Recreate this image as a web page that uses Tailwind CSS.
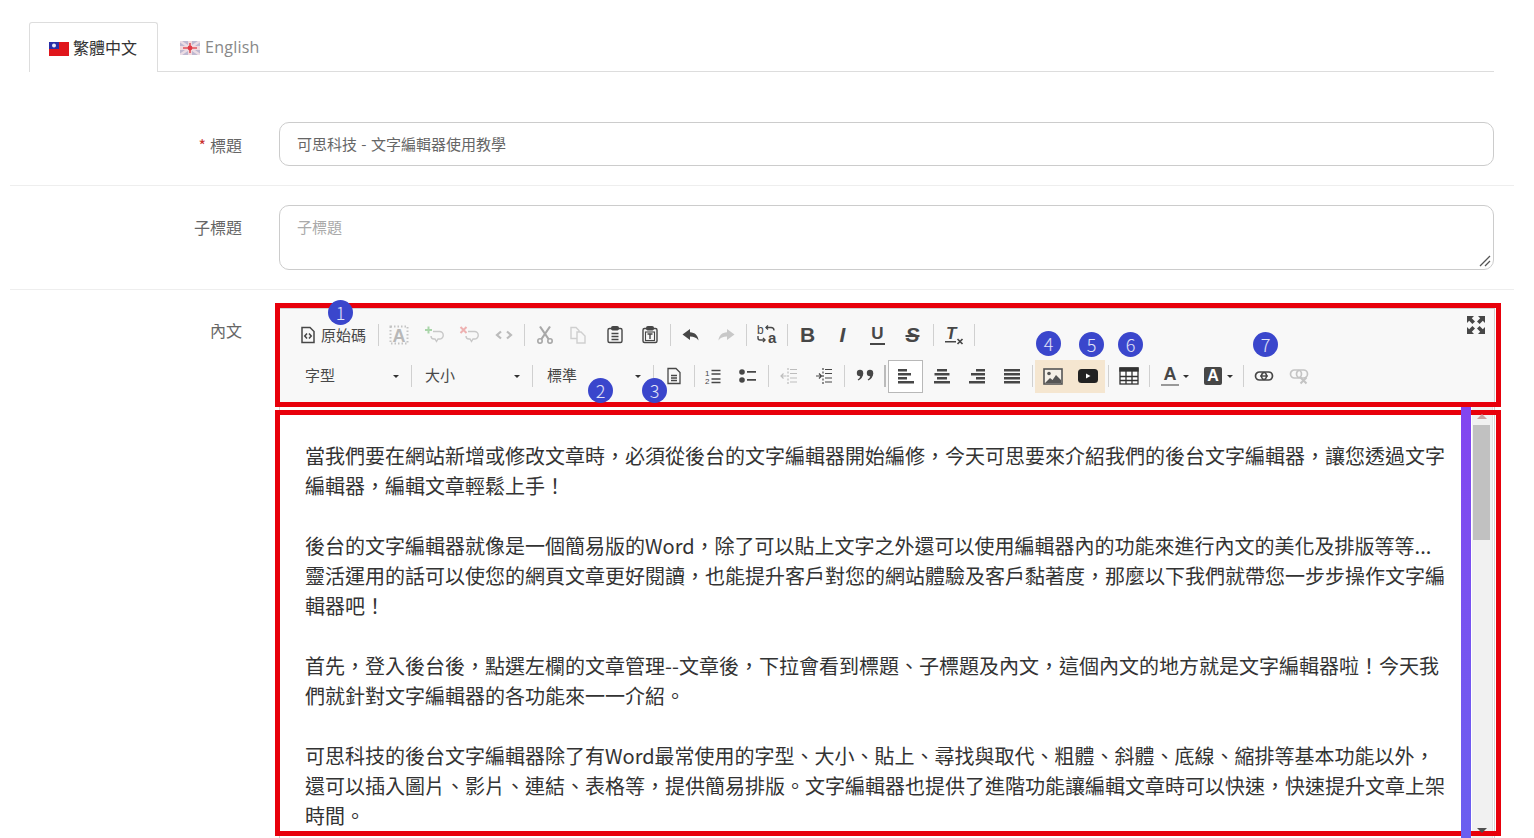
<!DOCTYPE html>
<html lang="zh-Hant">
<head>
<meta charset="utf-8">
<script src="https://cdn.jsdelivr.net/npm/@tailwindcss/browser@4"></script>
<title>文字編輯器</title>
</head>
<body class="bg-white">
<div class="relative h-[838px] w-[1534px] overflow-hidden bg-white font-['Noto_Sans_CJK_TC','Noto_Sans',sans-serif] text-[#333]">

  <!-- tabs -->
  <div class="ml-[29px] w-[1465px] pt-[22px]">
    <div class="flex h-[50px] border-b border-[#ddd]">
      <div class="flex h-[50px] w-[129px] items-center rounded-t-[3px] border border-b-0 border-[#ddd] bg-white pl-[19px] text-[16px] text-[#333]">
        <svg class="mr-[4px] mt-[2px]" width="20" height="14" viewBox="0 0 20 14"><rect width="20" height="14" fill="#e0161c"/><rect width="10" height="7" fill="#2a2fa8"/><circle cx="5" cy="3.5" r="2" fill="#e8e8f8"/></svg>
        <span class="-mt-[1px]">繁體中文</span>
      </div>
      <div class="flex h-[50px] items-center pl-[22px] text-[16px] text-[#888]">
        <svg class="mr-[5px] mt-[2px]" width="20" height="14" viewBox="0 0 20 14"><rect width="20" height="14" fill="#bdb8d0"/><path d="M0 0L20 14M20 0L0 14" stroke="#ecdce4" stroke-width="2.5"/><path d="M10 0V14M0 7H20" stroke="#f0d8dc" stroke-width="4"/><path d="M10 2V12M3 7H17" stroke="#e0505a" stroke-width="1.6"/><circle cx="10" cy="7" r="2.4" fill="#e03a44"/></svg>
        <span class="font-['Open_Sans','Noto_Sans',sans-serif] tracking-[0.25px]">English</span>
      </div>
    </div>
  </div>

  <!-- title row -->
  <div class="ml-[10px] flex h-[114px] w-[1504px] border-b border-[#eee] pt-[50px]">
    <label class="w-[232px] pt-[11px] text-right text-[16px] leading-[24px] text-[#666]"><span class="mr-[4px] text-[#c9302c]">*</span>標題</label>
    <div class="ml-[37px] h-[44px] w-[1215px] rounded-[10px] border border-[#ccc] pl-[17px] pt-[9px] text-[15px] leading-[24px] text-[#666] [word-spacing:1px]">可思科技 - 文字編輯器使用教學</div>
  </div>

  <!-- subtitle row -->
  <div class="ml-[10px] flex h-[104px] w-[1504px] border-b border-[#eee] pt-[19px]">
    <label class="w-[232px] pt-[10px] text-right text-[16px] leading-[24px] text-[#666]">子標題</label>
    <div class="relative ml-[37px] h-[65px] w-[1215px] rounded-[10px] border border-[#ccc] pl-[17px] pt-[10px] text-[15px] leading-[21px] text-[#aaa]">子標題
      <svg class="absolute bottom-[1px] right-[1px]" width="14" height="14" viewBox="0 0 14 14"><path d="M2 12L12 2M7 12L12 7" stroke="#555" stroke-width="1.3"/></svg>
    </div>
  </div>

  <!-- content row -->
  <div class="ml-[10px] flex w-[1504px] pt-[18px]">
    <label class="w-[232px] pt-[10px] text-right text-[16px] leading-[24px] text-[#666]">內文</label>
    <div class="ml-[37px] w-[1216px] border border-[#d1d1d1]">

      <!-- toolbar -->
      <div class="h-[97px] bg-[#f8f8f8] pl-[17px] pt-[11px] text-[#474747]">
        <div class="flex h-[30px] items-center">
          <div class="flex h-[30px] w-[78px] items-center pl-[3px] text-[15px] text-[#484848]">
            <svg class="mr-[5px]" width="16" height="18" viewBox="0 0 16 18" fill="none" stroke="#474747" stroke-width="1.5"><path d="M2 1.5h8l4 4v11H2z"/><path d="M7 7.5L4.8 10 7 12.5M9 7.5L11.2 10 9 12.5" stroke-width="1.6"/></svg>
            <span>原始碼</span>
          </div>
          <div class="flex h-[22px] w-[6px] justify-center"><div class="w-px bg-[#d0d0d0]"></div></div>
          <div class="flex h-[30px] w-[35px] items-center justify-center"><svg width="20" height="20" viewBox="0 0 20 20"><rect x="1.5" y="1.5" width="17" height="17" fill="none" stroke="#c4c4c4" stroke-width="2" stroke-dasharray="1.5 2"/><text x="10" y="16.5" text-anchor="middle" font-family="Liberation Sans" font-weight="700" font-size="18" fill="#b8b8b8">A</text></svg></div>
          <div class="flex h-[30px] w-[35px] items-center justify-center"><svg width="20" height="20" viewBox="0 0 20 20" fill="none"><path d="M9 6.5h6.5a3 3 0 0 1 0 7.5H14l-1.5 2.5L11 14h-1a3 3 0 0 1-3-3" stroke="#c8c8c8" stroke-width="1.4"/><path d="M4.5 1.5v7M1 5h7" stroke="#a9d5a9" stroke-width="2"/></svg></div>
          <div class="flex h-[30px] w-[35px] items-center justify-center"><svg width="20" height="20" viewBox="0 0 20 20" fill="none"><path d="M9 6.5h6.5a3 3 0 0 1 0 7.5H14l-1.5 2.5L11 14h-1a3 3 0 0 1-3-3" stroke="#c8c8c8" stroke-width="1.4"/><path d="M1.5 2l6 6M7.5 2l-6 6" stroke="#eeb1b1" stroke-width="2"/></svg></div>
          <div class="flex h-[30px] w-[35px] items-center justify-center"><svg width="20" height="20" viewBox="0 0 20 20" fill="none" stroke="#bbb" stroke-width="2.2"><path d="M7 6.5L3 10l4 3.5M13 6.5l4 3.5-4 3.5"/></svg></div>
          <div class="flex h-[22px] w-[6px] justify-center"><div class="w-px bg-[#d0d0d0]"></div></div>
          <div class="flex h-[30px] w-[35px] items-center justify-center"><svg width="20" height="20" viewBox="0 0 20 20" fill="none" stroke="#a8a8a8" stroke-width="2.2"><path d="M5 1.5l8.5 12.5M15 1.5L6.5 14"/><circle cx="5" cy="16" r="2.2" stroke-width="1.6"/><circle cx="15" cy="16" r="2.2" stroke-width="1.6"/></svg></div>
          <div class="flex h-[30px] w-[35px] items-center justify-center"><svg class="-ml-[4px]" width="20" height="20" viewBox="0 0 20 20" fill="none" stroke="#cfcfcf" stroke-width="1.4"><path d="M3 2.5h5l3 3v8H3z"/><path d="M9 7h4l4 4v7H9z" fill="#f8f8f8"/></svg></div>
          <div class="flex h-[30px] w-[35px] items-center justify-center"><svg width="20" height="20" viewBox="0 0 20 20" fill="none" stroke="#474747"><path d="M6 3.5H4.5a1.5 1.5 0 0 0-1.5 1.5v11a1.5 1.5 0 0 0 1.5 1.5h11a1.5 1.5 0 0 0 1.5-1.5V5a1.5 1.5 0 0 0-1.5-1.5H14" stroke-width="1.4"/><rect x="6.5" y="1.5" width="7" height="3.5" rx="1" fill="#474747"/><path d="M6.5 8.5h7M6.5 11.5h7M6.5 14.5h7" stroke-width="1.4"/></svg></div>
          <div class="flex h-[30px] w-[35px] items-center justify-center"><svg width="20" height="20" viewBox="0 0 20 20" fill="none" stroke="#474747"><path d="M6 3.5H4.5a1.5 1.5 0 0 0-1.5 1.5v11a1.5 1.5 0 0 0 1.5 1.5h11a1.5 1.5 0 0 0 1.5-1.5V5a1.5 1.5 0 0 0-1.5-1.5H14" stroke-width="1.4"/><rect x="6.5" y="1.5" width="7" height="3.5" rx="1" fill="#474747"/><rect x="5.5" y="7" width="9" height="8.5" stroke-width="1.1"/><path d="M7.5 9h5M10 9v5" stroke-width="1.4"/></svg></div>
          <div class="flex h-[22px] w-[6px] justify-center"><div class="w-px bg-[#d0d0d0]"></div></div>
          <div class="flex h-[30px] w-[35px] items-center justify-center"><svg width="20" height="20" viewBox="0 0 20 20"><path d="M9 4L1.5 9.5 9 15v-3.6c4 0 6.5 1 8.5 4C17 10.5 14 7.5 9 7.3z" fill="#474747"/></svg></div>
          <div class="flex h-[30px] w-[35px] items-center justify-center"><svg width="20" height="20" viewBox="0 0 20 20"><path d="M11 4l7.5 5.5L11 15v-3.6c-4 0-6.5 1-8.5 4C3 10.5 6 7.5 11 7.3z" fill="#c8c8c8"/></svg></div>
          <div class="flex h-[22px] w-[6px] justify-center"><div class="w-px bg-[#d0d0d0]"></div></div>
          <div class="flex h-[30px] w-[35px] items-center justify-center"><svg class="overflow-visible" width="22" height="22" viewBox="0 0 22 22" fill="none" stroke="#474747" stroke-width="1.4"><text x="1" y="10" font-family="Liberation Sans" font-size="12" fill="#474747" stroke="none">b</text><text x="12" y="19" font-family="Liberation Sans" font-size="15" font-weight="700" fill="#474747" stroke="none">a</text><path d="M10 3.5h5a3 3 0 0 1 3 3"/><path d="M12 1.5L10 3.5l2 2"/><path d="M2 12v2a2 2 0 0 0 2 2h5"/><path d="M7 14l2 2-2 2"/></svg></div>
          <div class="flex h-[22px] w-[6px] justify-center"><div class="w-px bg-[#d0d0d0]"></div></div>
          <div class="flex h-[30px] w-[35px] items-center justify-center font-['Liberation_Sans'] text-[21px] font-bold text-[#474747]">B</div>
          <div class="flex h-[30px] w-[35px] items-center justify-center font-['Liberation_Sans'] text-[21px] font-bold italic text-[#474747]">I</div>
          <div class="flex h-[30px] w-[35px] items-center justify-center font-['Liberation_Sans'] text-[17px] font-bold leading-[16px] text-[#474747]"><span class="border-b-[2px] border-[#474747] px-[1px] pb-[1px]">U</span></div>
          <div class="flex h-[30px] w-[35px] items-center justify-center font-['Liberation_Sans'] text-[21px] font-bold italic text-[#474747]"><span class="line-through decoration-2">S</span></div>
          <div class="flex h-[22px] w-[6px] justify-center"><div class="w-px bg-[#d0d0d0]"></div></div>
          <div class="flex h-[30px] w-[35px] items-center justify-center"><svg width="22" height="22" viewBox="0 0 22 22" fill="#474747"><text x="3" y="15" font-family="Liberation Sans" font-weight="700" font-style="italic" font-size="17">T</text><path d="M2 17h11v1.5H2z"/><path d="M14.5 15l5 5M19.5 15l-5 5" stroke="#474747" stroke-width="1.7"/></svg></div>
          <div class="flex h-[22px] w-[6px] justify-center"><div class="w-px bg-[#d0d0d0]"></div></div>
        </div>

        <div class="mt-[11px] flex h-[30px] items-center">
          <div class="flex h-[30px] w-[111px] items-center justify-between pl-[8px] pr-[9.5px] text-[15px] text-[#484848]"><span class="-mt-[2px]">字型</span><span class="h-0 w-0 border-x-[3.5px] border-t-[3.5px] border-x-transparent border-t-[#333]"></span></div>
          <div class="flex h-[22px] w-[6px] justify-center"><div class="w-px bg-[#d0d0d0]"></div></div>
          <div class="flex h-[30px] w-[115px] items-center justify-between pl-[11px] pr-[9.5px] text-[15px] text-[#484848]"><span class="-mt-[2px]">大小</span><span class="h-0 w-0 border-x-[3.5px] border-t-[3.5px] border-x-transparent border-t-[#333]"></span></div>
          <div class="flex h-[22px] w-[6px] justify-center"><div class="w-px bg-[#d0d0d0]"></div></div>
          <div class="flex h-[30px] w-[115px] items-center justify-between pl-[12px] pr-[9px] text-[15px] text-[#484848]"><span class="-mt-[2px]">標準</span><span class="h-0 w-0 border-x-[3.5px] border-t-[3.5px] border-x-transparent border-t-[#333]"></span></div>
          <div class="flex h-[22px] w-[6px] justify-center"><div class="w-px bg-[#d0d0d0]"></div></div>
          <div class="flex h-[30px] w-[35px] items-center justify-center"><svg width="18" height="20" viewBox="0 0 18 20" fill="none" stroke="#474747" stroke-width="1.3"><path d="M3 2.5h8l4 4v11H3z"/><path d="M6 9.5h6M6 12h6M6 14.5h6"/></svg></div>
          <div class="flex h-[22px] w-[6px] justify-center"><div class="w-px bg-[#d0d0d0]"></div></div>
          <div class="-ml-[2px] flex h-[30px] w-[35px] items-center justify-center"><svg width="20" height="20" viewBox="0 0 20 20" fill="none" stroke="#474747" stroke-width="1.8"><path d="M8.5 4.5h9M8.5 8h9M8.5 13h9M8.5 16.5h9" stroke-width="1.5"/><text x="2" y="9.5" font-family="Liberation Sans" font-size="8" fill="#474747" stroke="none">1</text><text x="2" y="18" font-family="Liberation Sans" font-size="8" fill="#474747" stroke="none">2</text></svg></div>
          <div class="flex h-[30px] w-[35px] items-center justify-center"><svg width="20" height="20" viewBox="0 0 20 20" fill="#474747"><circle cx="4" cy="6" r="2.8"/><circle cx="4" cy="14" r="2.8"/><path d="M9 5h9v1.8H9zM9 13h9v1.8H9z"/></svg></div>
          <div class="flex h-[22px] w-[6px] justify-center"><div class="w-px bg-[#d0d0d0]"></div></div>
          <div class="flex h-[30px] w-[35px] items-center justify-center"><svg width="20" height="20" viewBox="0 0 20 20" fill="none" stroke="#bdbdbd" stroke-width="1.2"><path d="M9 2v16" stroke-dasharray="2 1.5"/><path d="M11 3.5h7M11 7.5h7M11 12h7M11 16h7"/><path d="M7.5 10H2M4.5 7.5L2 10l2.5 2.5"/></svg></div>
          <div class="flex h-[30px] w-[35px] items-center justify-center"><svg width="20" height="20" viewBox="0 0 20 20" fill="none" stroke="#474747" stroke-width="1.2"><path d="M9 2v16" stroke-dasharray="2 1.5"/><path d="M11 3.5h7M11 7.5h7M11 12h7M11 16h7"/><path d="M2 10h5.5M5 7.5L7.5 10 5 12.5"/></svg></div>
          <div class="flex h-[22px] w-[6px] justify-center"><div class="w-px bg-[#d0d0d0]"></div></div>
          <div class="flex h-[30px] w-[35px] items-center justify-center"><svg width="20" height="20" viewBox="0 0 20 20" fill="#474747"><circle cx="5" cy="7" r="3.2"/><path d="M8.2 7c0 4-2.5 6.5-5 7.5l-.5-1c1.5-1 2.5-2 2.5-3.5z"/><circle cx="15" cy="7" r="3.2"/><path d="M18.2 7c0 4-2.5 6.5-5 7.5l-.5-1c1.5-1 2.5-2 2.5-3.5z"/></svg></div>
          <div class="flex h-[22px] w-[6px] justify-center"><div class="w-[2px] bg-[#bbb]"></div></div>
          <div class="flex h-[33px] w-[35px] items-center justify-center border border-[#b8b8b8] bg-white"><svg width="18" height="18" viewBox="0 0 18 18" fill="#474747"><path d="M1 2h9v2.4H1zM1 6h13v2.4H1zM1 10h9v2.4H1zM1 14h16v2.4H1z"/></svg></div>
          <div class="ml-[1px] flex h-[30px] w-[35px] items-center justify-center"><svg width="18" height="18" viewBox="0 0 18 18" fill="#474747"><path d="M4 2h10v2.4H4zM1.5 6h15v2.4h-15zM4 10h10v2.4H4zM1 14h16v2.4H1z"/></svg></div>
          <div class="flex h-[30px] w-[35px] items-center justify-center"><svg width="18" height="18" viewBox="0 0 18 18" fill="#474747"><path d="M8 2h9v2.4H8zM3 6h14v2.4H3zM8 10h9v2.4H8zM1 14h16v2.4H1z"/></svg></div>
          <div class="flex h-[30px] w-[35px] items-center justify-center"><svg width="18" height="18" viewBox="0 0 18 18" fill="#474747"><path d="M1 2h16v2.4H1zM1 6h16v2.4H1zM1 10h16v2.4H1zM1 14h16v2.4H1z"/></svg></div>
          <div class="flex h-[22px] w-[6px] justify-center"><div class="w-px bg-[#d0d0d0]"></div></div>
          <div class="flex h-[33px] items-center bg-[#f5e6d0] pl-[1px]">
            <div class="flex h-[30px] w-[34px] items-center justify-center"><svg width="20" height="17" viewBox="0 0 20 17"><rect x="1" y="1" width="18" height="15" fill="#f5f0e8" stroke="#555" stroke-width="1.6"/><circle cx="6" cy="5.5" r="1.8" fill="#555"/><path d="M2 15l5-5 2.5 2 3.5-5 5 5v3z" fill="#555"/></svg></div>
            <div class="flex h-[30px] w-[35px] items-center justify-center"><svg width="20" height="14" viewBox="0 0 20 14"><rect width="20" height="14" rx="3.5" fill="#222"/><path d="M8 4.5l4.5 2.5L8 9.5z" fill="#fff"/></svg></div>
          </div>
          <div class="flex h-[22px] w-[6px] justify-center"><div class="w-px bg-[#d0d0d0]"></div></div>
          <div class="flex h-[30px] w-[35px] items-center justify-center"><svg width="20" height="18" viewBox="0 0 20 18" fill="none" stroke="#333" stroke-width="1.3"><rect x="1" y="1" width="18" height="16" fill="#fff"/><rect x="1" y="1" width="18" height="3" fill="#333"/><path d="M1 9.5h18M1 13.5h18M7 4v13M13 4v13"/></svg></div>
          <div class="flex h-[22px] w-[6px] justify-center"><div class="w-px bg-[#d0d0d0]"></div></div>
          <div class="flex h-[30px] w-[38px] items-center pl-[9px]"><div class="flex flex-col items-center"><span class="font-['Liberation_Sans'] text-[18px] font-bold leading-[17px] text-[#474747]">A</span><span class="mt-[1px] h-[2px] w-[18px] bg-[#999]"></span></div><span class="ml-[4px] h-0 w-0 border-x-[3.5px] border-t-[3.5px] border-x-transparent border-t-[#333]"></span></div>
          <div class="ml-[14px] flex h-[30px] w-[40px] items-center"><span class="flex h-[18px] w-[18px] items-center justify-center rounded-[2px] bg-[#474747] font-['Liberation_Sans'] text-[16px] font-bold text-white">A</span><span class="ml-[5px] h-0 w-0 border-x-[3.5px] border-t-[3.5px] border-x-transparent border-t-[#333]"></span></div>
          <div class="-ml-[4px] flex h-[22px] w-[6px] justify-center"><div class="w-px bg-[#d0d0d0]"></div></div>
          <div class="flex h-[30px] w-[35px] items-center justify-center"><svg width="20" height="12" viewBox="0 0 20 12" fill="none" stroke="#474747" stroke-width="1.7"><rect x="1.5" y="2" width="11" height="8" rx="4"/><rect x="7.5" y="2" width="11" height="8" rx="4"/><path d="M6 6h8" stroke-width="1.4"/></svg></div>
          <div class="flex h-[30px] w-[35px] items-center justify-center"><svg width="20" height="18" viewBox="0 0 20 18" fill="none" stroke="#c4c4c4" stroke-width="1.7"><rect x="1.5" y="3" width="11" height="8" rx="4"/><rect x="7.5" y="3" width="11" height="8" rx="4"/><path d="M11.5 10.5l6 6M17.5 10.5l-6 6" stroke-width="2"/></svg></div>
        </div>
        <div class="absolute left-[1467px] top-[316px]"><svg width="18" height="18" viewBox="0 0 18 18" fill="#474747"><path d="M0 0h7L4.8 2.2 8 5.4 5.4 8 2.2 4.8 0 7zM18 0v7l-2.2-2.2L12.6 8 10 5.4l3.2-3.2L11 0zM0 18v-7l2.2 2.2L5.4 10 8 12.6l-3.2 3.2L7 18zM18 18h-7l2.2-2.2L10 12.6l2.6-2.6 3.2 3.2L18 11z"/></svg></div>
      </div>

      <!-- content -->
      <div class="flex h-[440px] border-t border-[#d1d1d1] bg-white">
        <div class="w-[1192px] pl-[25px] pr-[14px] pt-[34px] text-[20px] leading-[30px] text-[#333]">
          <p>當我們要在網站新增或修改文章時，必須從後台的文字編輯器開始編修，今天可思要來介紹我們的後台文字編輯器，讓您透過文字<br>編輯器，編輯文章輕鬆上手！</p>
          <p class="mt-[30px]">後台的文字編輯器就像是一個簡易版的Word，除了可以貼上文字之外還可以使用編輯器內的功能來進行內文的美化及排版等等...<br>靈活運用的話可以使您的網頁文章更好閱讀，也能提升客戶對您的網站體驗及客戶黏著度，那麼以下我們就帶您一步步操作文字編<br>輯器吧！</p>
          <p class="mt-[30px]">首先，登入後台後，點選左欄的文章管理--文章後，下拉會看到標題、子標題及內文，這個內文的地方就是文字編輯器啦！今天我<br>們就針對文字編輯器的各功能來一一介紹。</p>
          <p class="mt-[30px]">可思科技的後台文字編輯器除了有Word最常使用的字型、大小、貼上、尋找與取代、粗體、斜體、底線、縮排等基本功能以外，<br>還可以插入圖片、影片、連結、表格等，提供簡易排版。文字編輯器也提供了進階功能讓編輯文章時可以快速，快速提升文章上架<br>時間。</p>
        </div>
        <div class="w-[21px] bg-[#f1f1f1] border-r border-[#e4e4e4]">
          <div class="ml-[1px] mt-[18px] h-[115px] w-[17px] bg-[#c1c1c1]"></div>
        </div>
      </div>
    </div>
  </div>

  <!-- annotations -->
  <div class="absolute left-[275px] top-[303px] h-[104px] w-[1226px] border-[5px] border-[#e8000b]"></div>
  <div class="absolute left-[275px] top-[410px] h-[426px] w-[1226px] border-[5px] border-[#e8000b]"></div>
  <div class="absolute left-[1461px] top-[407px] h-[431px] w-[10px] bg-gradient-to-b from-[#8345f0] to-[#6a5ff0]"></div>
  <div class="absolute left-[1477px] top-[414px] h-0 w-0 border-x-[5px] border-b-[5px] border-x-transparent border-b-[#c9a0a0]"></div>
  <div class="absolute left-[1477px] top-[828px] h-0 w-0 border-x-[5px] border-t-[5px] border-x-transparent border-t-[#505050]"></div>

  <div class="absolute left-[328px] top-[300px] flex h-[25px] w-[25px] items-center justify-center rounded-full bg-[#3a46cc] text-[18px] font-light text-white/85">1</div>
  <div class="absolute left-[588px] top-[378px] flex h-[25px] w-[25px] items-center justify-center rounded-full bg-[#3a46cc] text-[18px] font-light text-white/85">2</div>
  <div class="absolute left-[642px] top-[378px] flex h-[25px] w-[25px] items-center justify-center rounded-full bg-[#3a46cc] text-[18px] font-light text-white/85">3</div>
  <div class="absolute left-[1036px] top-[331px] flex h-[25px] w-[25px] items-center justify-center rounded-full bg-[#3a46cc] text-[18px] font-light text-white/85">4</div>
  <div class="absolute left-[1079px] top-[332px] flex h-[25px] w-[25px] items-center justify-center rounded-full bg-[#3a46cc] text-[18px] font-light text-white/85">5</div>
  <div class="absolute left-[1118px] top-[332px] flex h-[25px] w-[25px] items-center justify-center rounded-full bg-[#3a46cc] text-[18px] font-light text-white/85">6</div>
  <div class="absolute left-[1253px] top-[332px] flex h-[25px] w-[25px] items-center justify-center rounded-full bg-[#3a46cc] text-[18px] font-light text-white/85">7</div>
</div>
</body>
</html>
